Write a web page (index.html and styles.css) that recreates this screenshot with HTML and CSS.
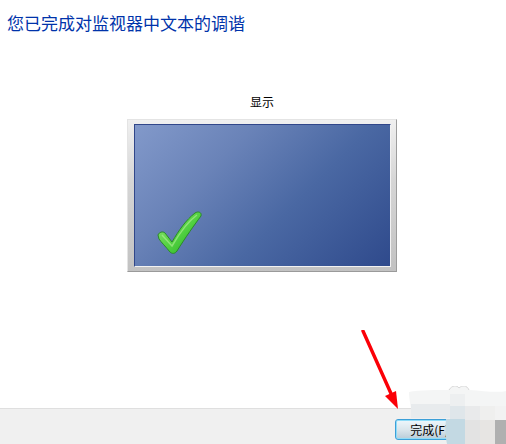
FILE: index.html
```html
<!DOCTYPE html>
<html>
  <head>
    <title>完成调谐</title>
    <link rel="stylesheet" href="styles.css">
  </head>
  <body>
    <div class="page">
      <h1 class="title">您已完成对监视器中文本的调谐</h1>
      <div class="content">
        <div class="display-label">显示</div>
        <div class="monitor">
          <div class="screen">
            <svg class="check" width="48" height="50" viewBox="0 0 48 50">
              <defs>
                <linearGradient id="checkFill" x1="0" y1="0" x2="1" y2="1">
                  <stop offset="0" stop-color="#9be678"/>
                  <stop offset="0.55" stop-color="#4fd03f"/>
                  <stop offset="1" stop-color="#22a81f"/>
                </linearGradient>
              </defs>
              <path d="M3 27 C4 24 8 23 10 25 L17 34 C24 22 31 12 40 5 C43 3 47 4 46 8 C40 16 30 30 22 43 C20 46 17 46 15 44 C11 39 6 34 4 31 Z" fill="url(#checkFill)" stroke="#2a8a28" stroke-width="1"/>
              <path d="M7 27 L17 38 C24 26 32 14 42 7" fill="none" stroke="#b4ef98" stroke-width="1.5" opacity="0.6"/>
            </svg>
          </div>
        </div>
      </div>
      <div class="footer">
        <button class="finish-btn" type="button">完成(F)</button>
      </div>
    </div>

    <svg class="arrow" width="50" height="80" viewBox="0 0 50 80">
      <path d="M2 1 L32 68" stroke="#fb0007" stroke-width="3.4" fill="none" stroke-linecap="round"/>
      <path d="M24 66 L35 61 L37 79 Z" fill="#fb0007"/>
    </svg>

    <svg class="watermark" width="97" height="58" viewBox="0 0 97 58">
      <path d="M0 6 C10 4 30 4 40 4 C43 -1 48 -1 50 2 C53 -1 58 -1 60 4 C75 5 88 7 97 5 L97 34 L41 34 L41 32 L4 32 C2 24 0 12 0 6 Z" fill="#f4f5f5"/>
      <path d="M40 4 C43 -1 48 -1 50 2 C53 -1 58 -1 60 4" fill="none" stroke="#d8d8d8"/>
      <rect x="2" y="18" width="39" height="14" fill="#e8ebed"/>
      <rect x="41" y="8" width="15" height="12" fill="#edeff0"/>
      <rect x="41" y="20" width="15" height="14" fill="#dfe6ea"/>
      <path d="M37 33 H56 V58 H38 C36 50 36 42 37 33 Z" fill="#c3d9e3"/>
      <rect x="56" y="20" width="15" height="14" fill="#e9eaeb"/>
      <rect x="56" y="34" width="15" height="24" fill="#e3e3e3"/>
      <rect x="71" y="20" width="15" height="14" fill="#efefee"/>
      <rect x="71" y="34" width="15" height="24" fill="#e7e5e3"/>
      <rect x="86" y="20" width="11" height="14" fill="#f2f2f2"/>
      <rect x="86" y="34" width="11" height="24" fill="#b0b0b0"/>
    </svg>
  </body>
</html>
```

FILE: styles.css
```css
html, body {
  margin: 0;
  padding: 0;
}

body {
  width: 506px;
  height: 444px;
  overflow: hidden;
  background-color: #fff;
  font-family: "Noto Sans CJK SC", "Liberation Sans", sans-serif;
}

.page {
  display: flex;
  flex-direction: column;
  height: 444px;
}

.title {
  margin: 0;
  padding: 11px 0 0 7px;
  height: 24px;
  font-size: 17px;
  line-height: 24px;
  font-weight: normal;
  color: #0033aa;
}

.content {
  flex: 1;
  display: flex;
  flex-direction: column;
  align-items: center;
  padding: 59px 0 0 18px;
}

.display-label {
  font-size: 12px;
  line-height: 16px;
  color: #000;
  margin-bottom: 9px;
}

.monitor {
  box-sizing: border-box;
  width: 270px;
  height: 153px;
  padding: 4px 5px 4px 6px;
  background: linear-gradient(#f0f0f0, #d6d6d6 40%, #c2c2c2);
  border: 1px solid #e4e4e4;
  border-right-color: #9d9d9d;
  border-bottom-color: #9a9a9a;
}

.screen {
  box-sizing: border-box;
  height: 100%;
  display: flex;
  align-items: flex-end;
  padding: 0 0 8px 20px;
  border: 1px solid #31478a;
  border-right-color: #f2f2f2;
  border-bottom-color: #f2f2f2;
  background: linear-gradient(135deg, #8299ca 0%, #6a83b8 30%, #4a68a3 60%, #2f4a8c 100%);
}

.footer {
  box-sizing: border-box;
  height: 36px;
  display: flex;
  justify-content: flex-end;
  align-items: flex-start;
  padding: 10px 35px 0 0;
  background-color: #f0f0f0;
  border-top: 1px solid #dfdfdf;
}

.finish-btn {
  box-sizing: border-box;
  width: 76px;
  height: 21px;
  padding: 0 7px 0 0;
  font-family: "Noto Sans CJK SC", "Liberation Sans", sans-serif;
  font-size: 12px;
  line-height: 17px;
  color: #000;
  border: 1px solid #3c9fd8;
  border-radius: 3px;
  background: linear-gradient(#eef7fc, #dbe6ec 50%, #b9ccd8);
  box-shadow: inset 0 0 0 1px #8fdcf8;
}

.arrow {
  position: absolute;
  left: 361px;
  top: 330px;
}

.watermark {
  position: absolute;
  left: 409px;
  top: 386px;
}
```
